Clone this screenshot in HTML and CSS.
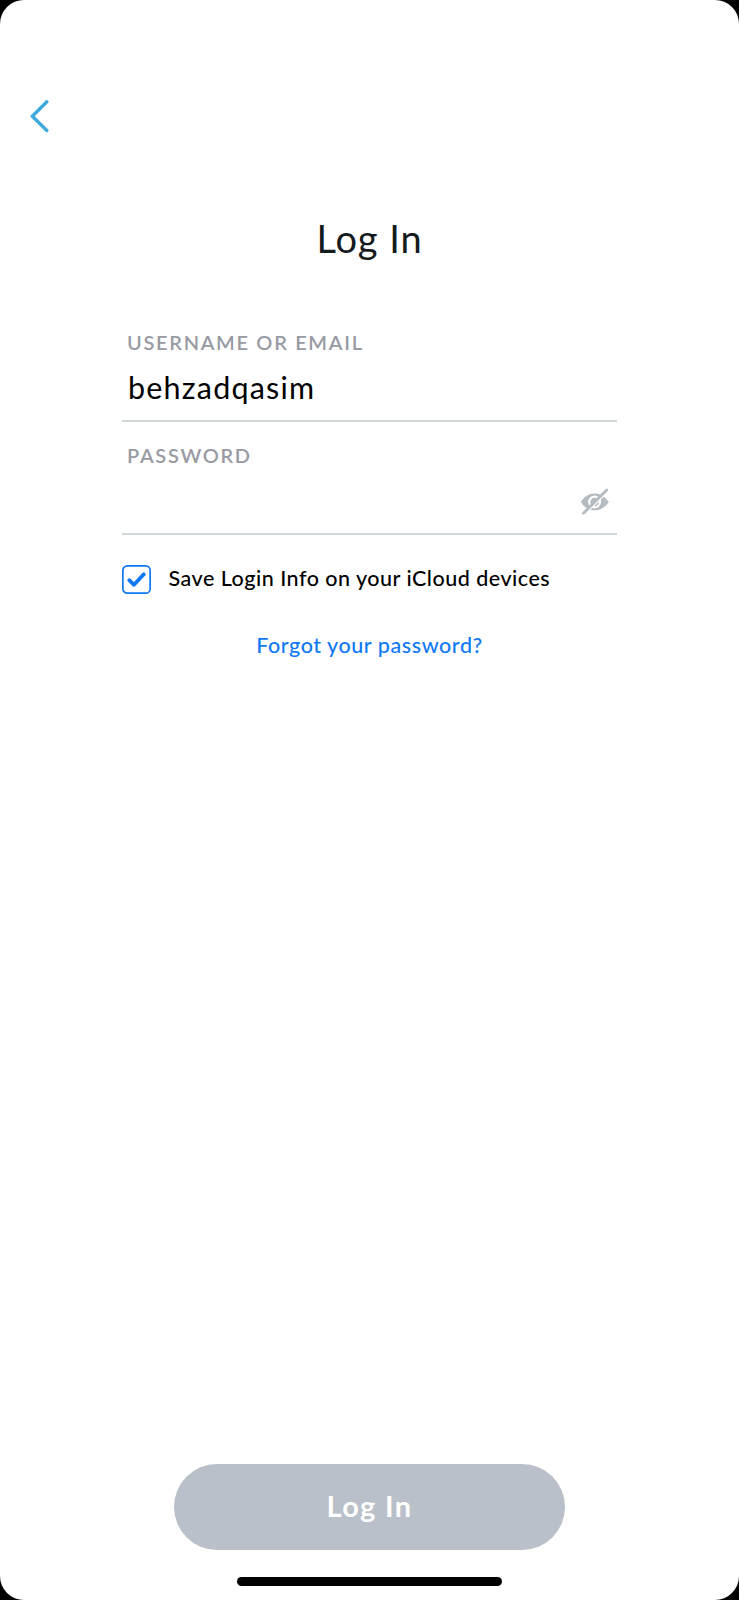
FILE: index.html
```html
<!DOCTYPE html>
<html lang="en">
<head>
<meta charset="utf-8">
<title>Log In</title>
<link rel="stylesheet" href="styles.css">
</head>
<body>
<main class="screen">
  <nav class="nav">
    <svg class="back" viewBox="0 0 20 34" width="20" height="34"><path d="M16.800 2.700 2.300 17.200 16.800 31.500"/></svg>
  </nav>
  <h1 class="title">Log In</h1>
  <form class="form">
    <div class="field">
      <label class="label">USERNAME OR EMAIL</label>
      <div class="value">behzadqasim</div>
    </div>
    <div class="field">
      <label class="label">PASSWORD</label>
      <div class="value value-end">
        <svg class="eye" viewBox="0 0 30 28" width="30" height="28">
          <path class="lid" fill-rule="evenodd" d="M.8 14C4 8.500 9 5.400 14.600 5.400S25.300 8.500 28.800 14C25.300 19.500 20.200 22.300 14.600 22.300S4 19.500.8 14ZM14.600 7.500a6.500 6.500 0 1 0 0 13a6.500 6.500 0 1 0 0-13Z"/>
          <circle class="lid" cx="14.600" cy="14" r="4.300"/>
          <path class="gap" d="M4.500 26.700 28.300 3.100"/>
          <path class="slash" d="M3.500 25.200 26.800 2"/>
        </svg>
      </div>
    </div>
    <div class="save">
      <svg class="check" viewBox="0 0 29 29" width="29" height="29"><rect x=".85" y=".85" width="27.300" height="27.300" rx="4.500"/><path d="M7.200 15.200 12 19.800 21.800 9.300"/></svg>
      <span class="save-text">Save Login Info on your iCloud devices</span>
    </div>
    <a class="forgot">Forgot your password?</a>
  </form>
  <footer class="footer">
    <button class="submit" type="button">Log In</button>
    <div class="home"></div>
  </footer>
</main>
</body>
</html>
```
FILE: styles.css
```css
* { box-sizing: border-box; }
body { margin: 0; background: #000; font-family: Lato, "Liberation Sans", sans-serif; }
.screen { display: flex; flex-direction: column; width: 739px; height: 1600px; background: #fff; border-radius: 24px; overflow: hidden; }
.nav { height: 215px; padding: 99px 0 0 30px; }
.back { display: block; fill: none; stroke: #40aadd; stroke-width: 3.400; stroke-linecap: round; stroke-linejoin: round; }
.title { margin: 0; text-align: center; font-size: 38px; line-height: 46px; letter-spacing: .9px; font-weight: 400; color: #151a1d; }
.form { display: flex; flex-direction: column; width: 495px; margin: 69px 0 0 122px; }
.field { display: flex; flex-direction: column; gap: 15px; height: 92px; margin-bottom: 21px; border-bottom: 2px solid #d0d7da; padding-left: 5px; }
.label { font-size: 20px; line-height: 24px; font-weight: 600; letter-spacing: 1.680px; color: #989ba3; }
.value { height: 36px; padding-left: 1px; font-size: 30.500px; line-height: 37px; letter-spacing: 1.200px; color: #000; }
.value-end { display: flex; justify-content: flex-end; padding-right: 7px; }
.eye { margin-top: 6px; }
.lid { fill: #b4bcc2; }
.gap { fill: none; stroke: #fff; stroke-width: 1.500; }
.slash { fill: none; stroke: #b4bcc2; stroke-width: 2.800; stroke-linecap: round; }
.save { display: flex; gap: 17.500px; margin-top: 9px; }
.check { fill: none; stroke: #0f78f5; stroke-width: 1.700; }
.check path { stroke-width: 3.800; stroke-linecap: round; stroke-linejoin: round; }
.save-text { font-size: 21.500px; line-height: 26px; letter-spacing: .5px; font-weight: 500; color: #000; white-space: nowrap; }
.forgot { margin-top: 38px; text-align: center; font-size: 21.500px; line-height: 27px; letter-spacing: .57px; font-weight: 500; color: #0f78f5; }
.footer { display: flex; flex-direction: column; align-items: center; gap: 27px; margin-top: auto; padding-bottom: 14px; }
.submit { width: 391px; height: 86px; border: 0; border-radius: 43px; padding: 0 0 3px; background: #b9c0c9; color: #fff; font: 700 29px/83px Lato, sans-serif; letter-spacing: 1.300px; }
.home { width: 265px; height: 9px; border-radius: 5px; background: #000; }
```
